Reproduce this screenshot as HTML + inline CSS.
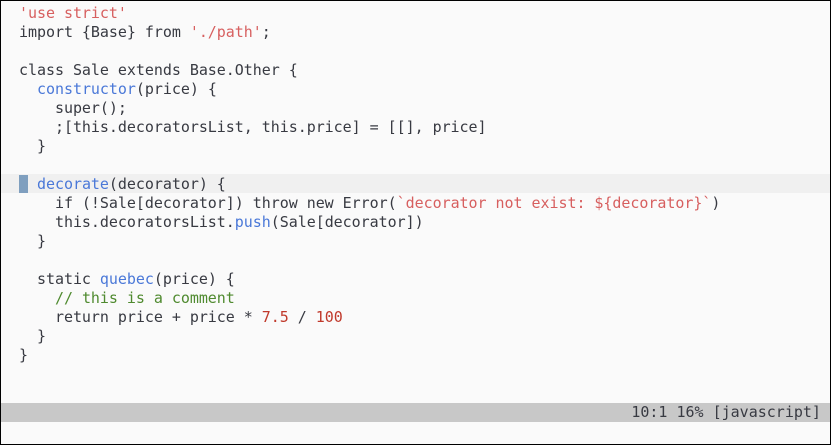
<!DOCTYPE html>
<html><head><style>
html,body{margin:0;padding:0}
body{width:831px;height:445px;background:#fafafa;position:relative;overflow:hidden;font-family:"DejaVu Sans Mono","Liberation Mono",monospace;font-size:15px;color:#383a42}
.frame{position:absolute;left:0;top:0;width:829px;height:443px;border:1px solid #000}
.code{position:absolute;left:19px;top:4px;white-space:pre;line-height:19px;letter-spacing:-0.04px}
.hl{position:absolute;left:1px;top:174px;width:829px;height:19px;background:#f0f0f0}
.cur{position:absolute;left:19px;top:175px;width:9px;height:18px;background:#7f9fbf}
.s{color:#d75f5f}.f{color:#4a78d8}.c{color:#4f8a2f}.n{color:#c0392b}
.status{position:absolute;left:1px;top:403px;width:829px;height:19px;background:#c8c8c8;line-height:19px;white-space:pre;text-align:right;color:#383a42}
</style></head><body>
<div class="hl"></div>
<div class="cur"></div>
<div class="code"><span class="s">'use strict'</span>
import {Base} from <span class="s">'./path'</span>;

class Sale extends Base.Other {
  <span class="f">constructor</span>(price) {
    super();
    ;[this.decoratorsList, this.price] = [[], price]
  }

  <span class="f">decorate</span>(decorator) {
    if (!Sale[decorator]) throw new Error(<span class="s">`decorator not exist: ${decorator}`</span>)
    this.decoratorsList.<span class="f">push</span>(Sale[decorator])
  }

  static <span class="f">quebec</span>(price) {
    <span class="c">// this is a comment</span>
    return price + price * <span class="n">7.5</span> / <span class="n">100</span>
  }
}</div>
<div class="status">10:1 16% [javascript] </div>
<div class="frame"></div>
</body></html>
